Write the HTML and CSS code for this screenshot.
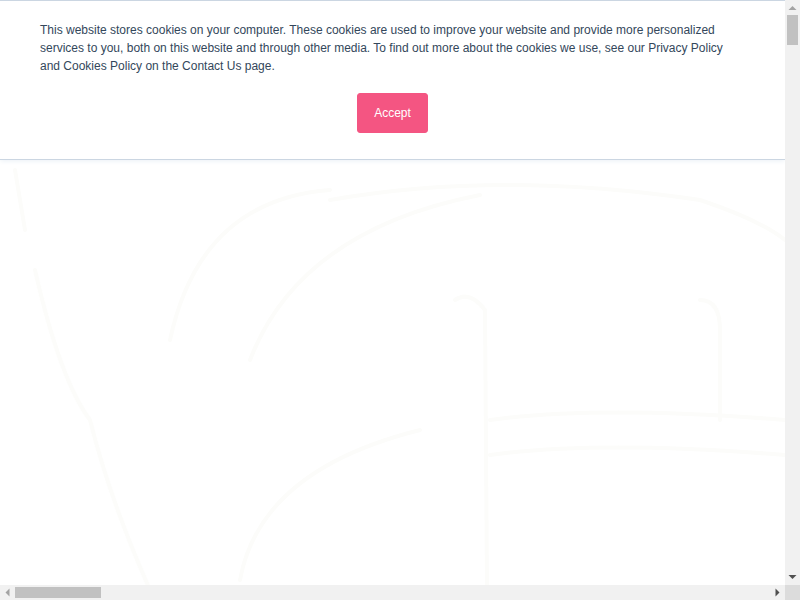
FILE: index.html
```html
<!DOCTYPE html>
<html lang="en">
<head>
<meta charset="utf-8">
<title>Cookie banner</title>
<link rel="stylesheet" href="styles.css">
</head>
<body>
<div class="window">
  <div class="viewport">
    <div class="cookie-banner">
      <div class="cookie-inner">
        <p class="cookie-text">This website stores cookies on your computer. These cookies are used to improve your website and provide more personalized services to you, both on this website and through other media. To find out more about the cookies we use, see our Privacy Policy and Cookies Policy on the Contact Us page.</p>
        <div class="cookie-actions">
          <button class="accept-btn" type="button">Accept</button>
        </div>
      </div>
    </div>
    <svg class="backdrop" width="785" height="425" viewBox="0 160 785 425" aria-hidden="true">
      <path d="M15 170 Q 20 200 25 230" />
      <path d="M35 270 Q 60 380 90 420 Q 110 500 150 590" />
      <path d="M170 340 Q 200 200 330 190" />
      <path d="M250 360 Q 300 230 480 195" />
      <path d="M330 200 Q 500 170 700 200 Q 760 220 785 240" />
      <path d="M455 300 Q 470 290 485 310 L 487 590" />
      <path d="M700 300 Q 720 300 720 330 L 720 420" />
      <path d="M240 580 Q 260 470 420 430" />
      <path d="M490 420 Q 600 405 785 420" />
      <path d="M490 455 Q 600 440 785 455" />
    </svg>
  </div>

  <div class="vscroll">
    <div class="arrow-box">
      <svg width="15" height="15" viewBox="0 0 15 15"><path class="arrow-off" d="M3.5 10 L7.5 6 L11.5 10 Z"/></svg>
    </div>
    <div class="vtrack"><div class="vthumb"></div></div>
    <div class="arrow-box">
      <svg width="15" height="15" viewBox="0 0 15 15"><path class="arrow-on" d="M3.5 5 L7.5 9 L11.5 5 Z"/></svg>
    </div>
  </div>

  <div class="hscroll">
    <div class="arrow-box">
      <svg width="15" height="15" viewBox="0 0 15 15"><path class="arrow-off" d="M9.5 3.5 L5.5 7.5 L9.5 11.5 Z"/></svg>
    </div>
    <div class="htrack"><div class="hthumb"></div></div>
    <div class="arrow-box">
      <svg width="15" height="15" viewBox="0 0 15 15"><path class="arrow-on" d="M5.5 3.5 L9.5 7.5 L5.5 11.5 Z"/></svg>
    </div>
  </div>

  <div class="corner"></div>
</div>
</body>
</html>
```

FILE: styles.css
```css
html, body {
  margin: 0;
  padding: 0;
  background: #ffffff;
  overflow: hidden;
}

body {
  font-family: "Liberation Sans", Arial, Helvetica, sans-serif;
}

.window {
  width: 800px;
  height: 600px;
  display: grid;
  grid-template-columns: 785px 15px;
  grid-template-rows: 585px 15px;
  overflow: hidden;
}

.viewport {
  display: flex;
  flex-direction: column;
  overflow: hidden;
  background: #ffffff;
}

.backdrop {
  display: block;
  flex: none;
}

.backdrop path {
  fill: none;
  stroke: #fcfcfa;
  stroke-width: 4;
  stroke-linecap: round;
}

.cookie-banner {
  position: relative;
  z-index: 2;
  flex: none;
  background: #ffffff;
  border-top: 1px solid #cbd6e2;
  border-bottom: 1px solid #cbd6e2;
  box-shadow: 0 1px 5px #eaf0f6;
  color: #33475b;
}

.cookie-inner {
  padding: 20px 40px 26px;
}

.cookie-text {
  margin: 0;
  max-width: 700px;
  font-size: 12px;
  line-height: 18px;
  color: #33475b;
}

.cookie-actions {
  display: flex;
  justify-content: center;
  margin-top: 18px;
}

.accept-btn {
  font-family: "Liberation Sans", Arial, Helvetica, sans-serif;
  font-size: 12px;
  line-height: 18px;
  padding: 10px 16px;
  border: 1px solid #f45582;
  border-radius: 3px;
  background: #f45582;
  color: #ffffff;
  cursor: pointer;
}

/* scrollbars */
.vscroll {
  display: flex;
  flex-direction: column;
  background: #f1f1f1;
}

.hscroll {
  display: flex;
  flex-direction: row;
  background: #f1f1f1;
}

.arrow-box {
  width: 15px;
  height: 15px;
  flex: none;
}

.arrow-box svg {
  display: block;
}

.arrow-off {
  fill: #a3a3a3;
}

.arrow-on {
  fill: #505050;
}

.vtrack {
  flex: 1;
  padding: 0 2px 0 2px;
}

.vthumb {
  height: 30px;
  background: #c1c1c1;
}

.htrack {
  flex: 1;
  display: flex;
  align-items: center;
}

.hthumb {
  width: 86px;
  height: 11px;
  background: #c1c1c1;
}

.corner {
  background: #dcdcdc;
}
```
